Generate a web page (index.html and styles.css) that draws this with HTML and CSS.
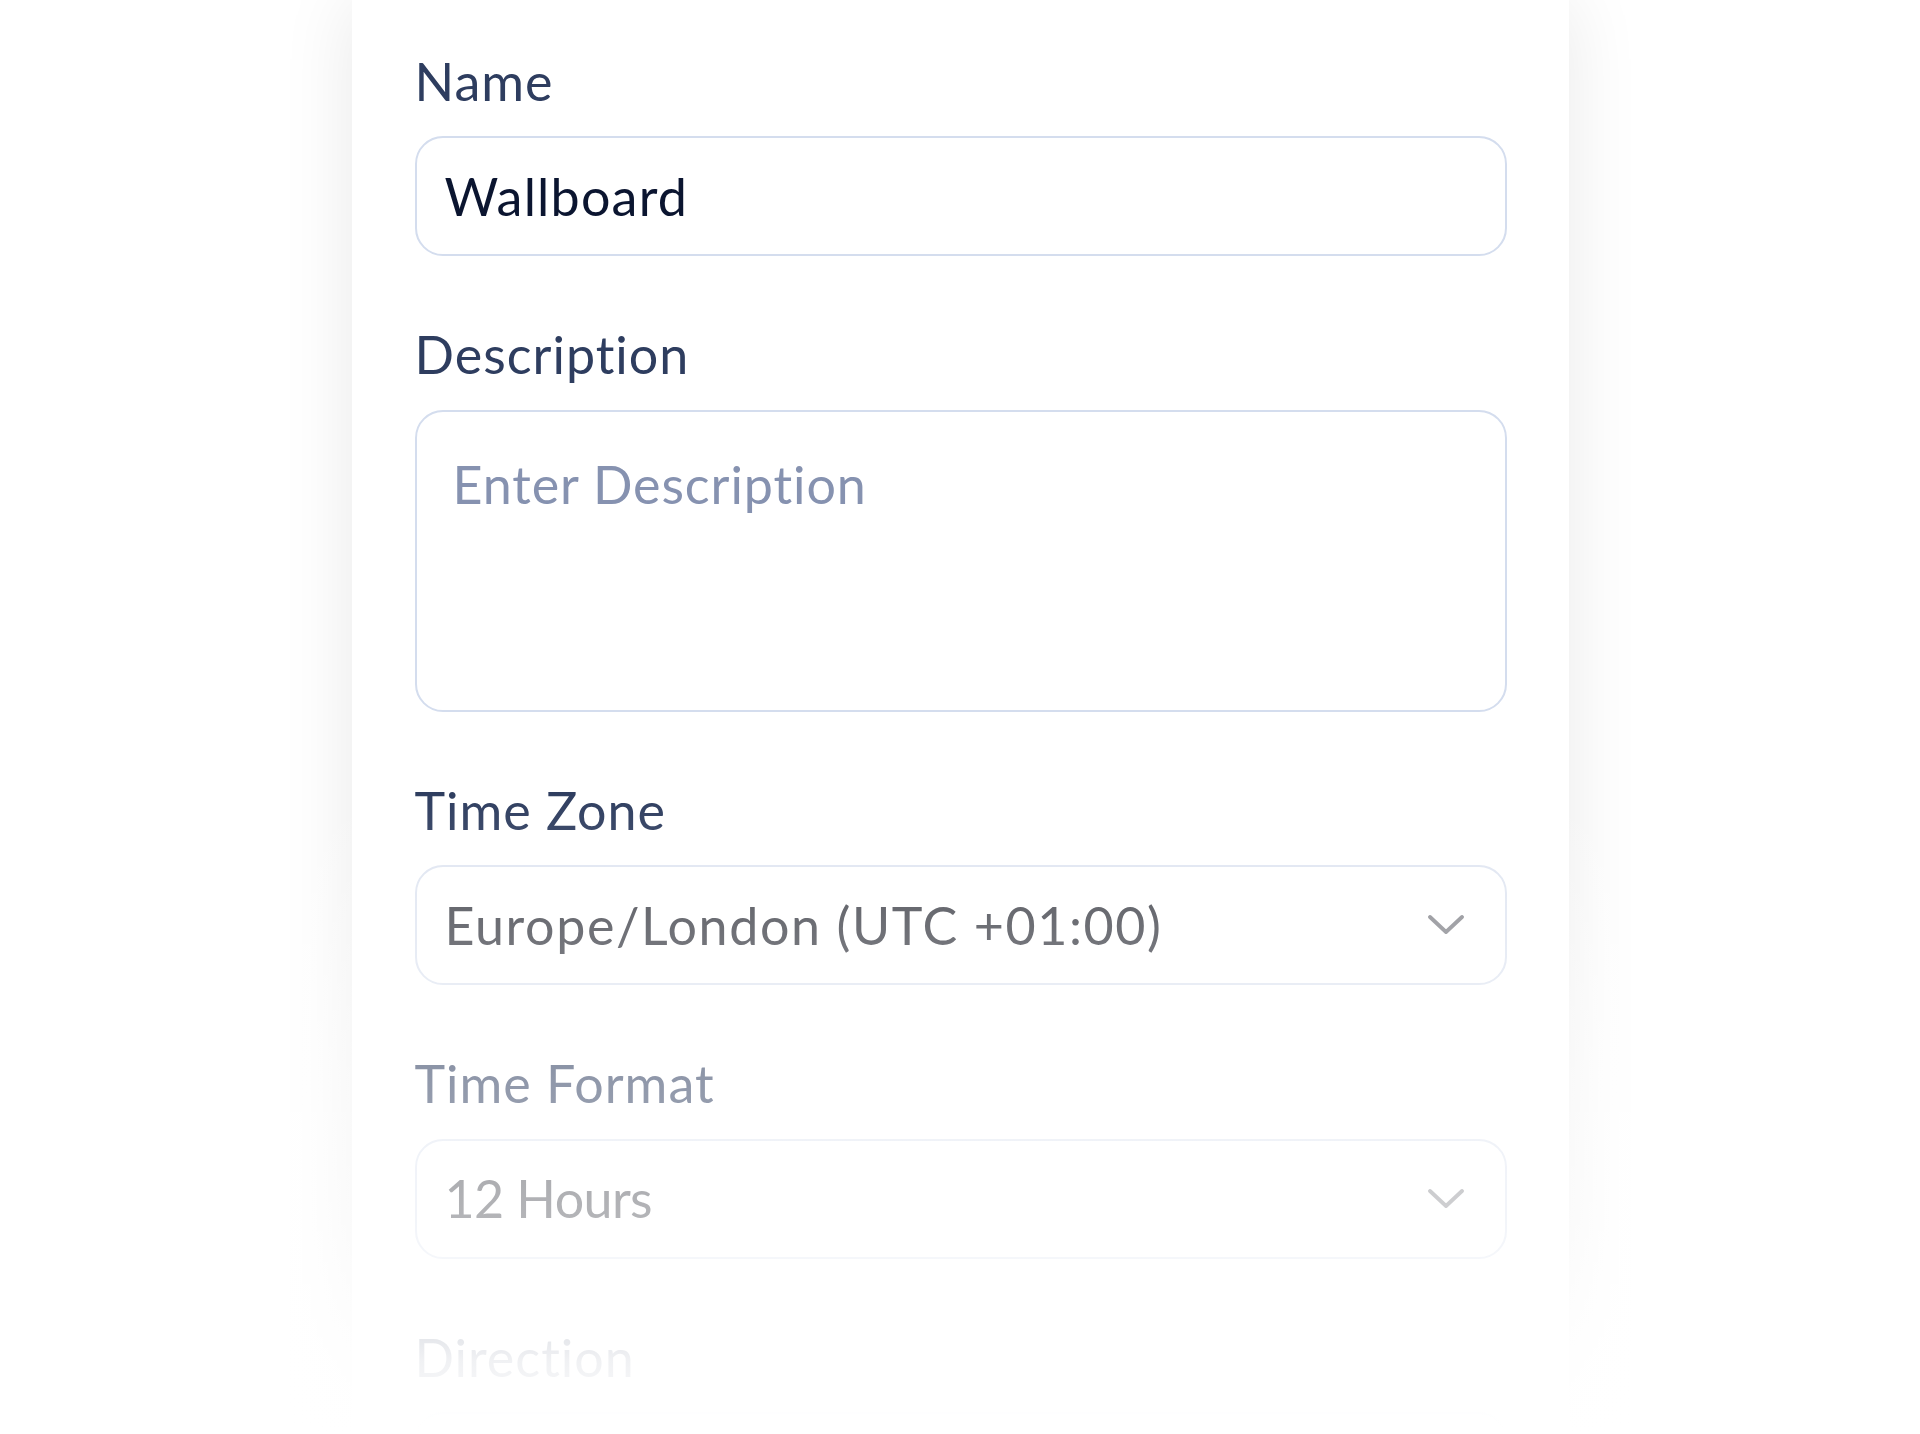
FILE: index.html
```html
<!DOCTYPE html>
<html lang="en">
<head>
<meta charset="utf-8">
<title>Wallboard settings</title>
<link rel="stylesheet" href="styles.css">
</head>
<body>
<div class="page">
  <form class="card">
    <div class="field">
      <label class="label" for="name">Name</label>
      <input class="control input" id="name" type="text" value="Wallboard">
    </div>
    <div class="field">
      <label class="label" for="desc">Description</label>
      <textarea class="control textarea" id="desc" placeholder="Enter Description"></textarea>
    </div>
    <div class="field">
      <span class="label">Time Zone</span>
      <div class="control select">
        <span class="select-value">Europe/London (UTC +01:00)</span>
        <svg class="chevron" width="36" height="20" viewBox="0 0 36 20"><polyline points="2,2 18,17 34,2" fill="none" stroke="#88898f" stroke-width="3.8" stroke-linecap="round" stroke-linejoin="round"/></svg>
      </div>
    </div>
    <div class="field">
      <span class="label">Time Format</span>
      <div class="control select">
        <span class="select-value select-value-tight">12 Hours</span>
        <svg class="chevron" width="36" height="20" viewBox="0 0 36 20"><polyline points="2,2 18,17 34,2" fill="none" stroke="#88898f" stroke-width="3.8" stroke-linecap="round" stroke-linejoin="round"/></svg>
      </div>
    </div>
    <div class="field">
      <span class="label">Direction</span>
      <div class="control select"></div>
    </div>
  </form>
  <div class="fade"></div>
</div>
</body>
</html>
```
FILE: styles.css
```css
html, body {
  margin: 0;
  padding: 0;
  background: #ffffff;
}
body {
  height: 1434px;
  overflow: hidden;
  font-family: "Lato", "Inter", sans-serif;
}
.page {
  position: relative;
  height: 1434px;
  overflow: hidden;
}
.card {
  width: 1217px;
  margin: 0 auto;
  box-sizing: border-box;
  padding: 50px 62px 200px 63px;
  background: #ffffff;
  box-shadow: 0 0 70px rgba(0, 0, 0, 0.09);
  display: flex;
  flex-direction: column;
  gap: 67px;
}
.field {
  display: flex;
  flex-direction: column;
}
.label {
  font-size: 52px;
  line-height: 1.2;
  letter-spacing: 1px;
  color: #2e3d5f;
  margin-bottom: 24px;
}
.control {
  box-sizing: border-box;
  width: 100%;
  border: 2px solid #d4ddee;
  border-radius: 28px;
  background: #ffffff;
  font-family: "Lato", "Inter", sans-serif;
  font-size: 52px;
  line-height: 1.2;
  letter-spacing: 1.2px;
  margin: 0;
  outline: none;
  appearance: none;
}
.input {
  height: 120px;
  padding: 0 28px;
  color: #0b1530;
}
.textarea {
  height: 302px;
  padding: 41px 36px;
  resize: none;
  color: #0b1530;
  display: block;
  letter-spacing: 0.9px;
}
.textarea::placeholder {
  color: #8692b0;
  opacity: 1;
}
.select {
  height: 120px;
  padding: 0 41px 0 28px;
  display: flex;
  align-items: center;
  justify-content: space-between;
  border-color: #dfe5f1;
}
.select-value {
  color: #44464e;
  letter-spacing: 1.6px;
}
.select-value-tight {
  letter-spacing: -0.6px;
}
.chevron {
  flex: none;
}
.fade {
  position: absolute;
  left: 0;
  top: 0;
  width: 100%;
  height: 1434px;
  pointer-events: none;
  background: linear-gradient(to bottom,
    rgba(255,255,255,0) 0px,
    rgba(255,255,255,0) 790px,
    rgba(255,255,255,0.47) 1080px,
    rgba(255,255,255,0.6) 1220px,
    rgba(255,255,255,0.93) 1360px,
    rgba(255,255,255,1) 1434px);
}
```
